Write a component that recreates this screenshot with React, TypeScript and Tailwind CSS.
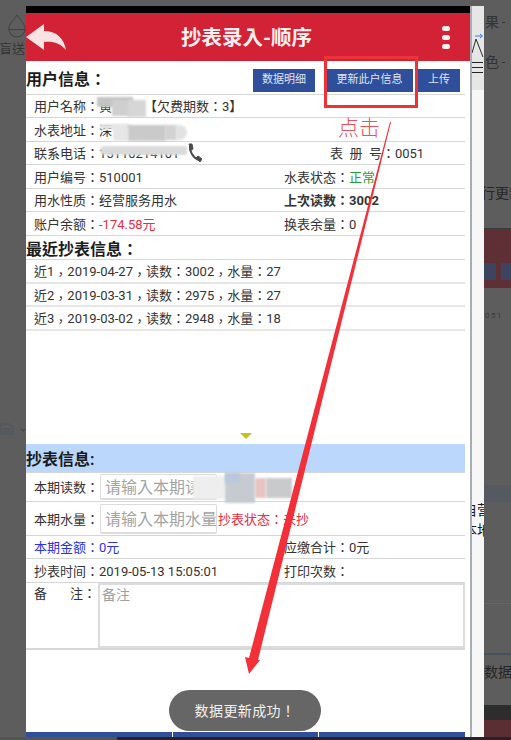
import type {ReactNode} from 'react';

// 打码块：截图里的马赛克
function Smudge({className}: {className: string}) {
  return <div className={`absolute blur-[1px] ${className}`} />;
}

function Row({children, className = ''}: {children: ReactNode; className?: string}) {
  return <div className={`flex items-center pl-[8px] pt-[2px] border-b border-[#d4d6d8] text-[13px] text-[#333] ${className}`}>{children}</div>;
}

function Half({children, className = ''}: {children: ReactNode; className?: string}) {
  return <div className={`w-[250px] shrink-0 whitespace-nowrap ${className}`}>{children}</div>;
}

function Heading({children}: {children: ReactNode}) {
  return <h2 className="pt-[4px] text-[16px] font-bold text-[#1c1c1c] whitespace-nowrap">{children}</h2>;
}

// 原图的逗号偏低
function Comma() {
  return <span className="relative top-[3px]">，</span>;
}

function Field({placeholder, className = ''}: {placeholder: string; className?: string}) {
  return (
    <div className={`w-[117px] shrink-0 overflow-hidden whitespace-nowrap rounded-[2px] border border-[#dcdcdc] border-b-2 pl-[4px] text-[16px] text-[#a4a4a4] ${className}`}>
      {placeholder}
    </div>
  );
}

function LeftStrip() {
  return (
    <div className="w-[26px] shrink-0 overflow-hidden pt-[14px]">
      <svg viewBox="0 0 22 26" className="ml-[7px] h-[24px] w-[20px]" fill="none" stroke="#3e3e3e" strokeWidth="1">
        <path d="M11 1 C7 7 2 11 2 16 a9 9 0 0 0 18 0 C20 11 15 7 11 1Z" />
        <path d="M2 17 H20" />
      </svg>
      <div className="mt-[3px] ml-[-1px] w-[30px] whitespace-nowrap text-[13px] leading-[15px] text-[#353535]">盲送</div>
      <svg viewBox="0 0 26 12" className="mt-[367px] h-[12px] w-[26px]" fill="none" stroke="#525861" strokeWidth="1.5">
        <path d="M1 1H9L13 4V11H1Z" />
        <path d="M3 6H11M3 9H11" />
        <path d="M21 6L23 8L25 6" stroke="#4a4a4a" />
      </svg>
    </div>
  );
}

function Gutter() {
  return (
    <div className="mt-[6px] flex w-[12px] shrink-0 flex-col overflow-hidden">
      <div className="h-[84px] shrink-0 bg-[#e6e6e6] pt-[27px] text-[#1e1e1e]">
        <svg viewBox="0 0 12 26" className="h-[26px] w-[12px]" fill="none" stroke="#2a2a2a" strokeWidth="1">
          <path d="M0 20L4 6L11 24" />
          <path d="M3 3H10M8 1L10.5 3L8 5" stroke="#3d7fd6" />
        </svg>
        <div className="mt-[3px] flex flex-col gap-[4px]">
          <span className="h-[1px] w-[11px] bg-[#222]" />
          <span className="h-[1px] w-[11px] bg-[#222]" />
          <span className="h-[1px] w-[11px] bg-[#222]" />
        </div>
      </div>
      <div className="flex-1 bg-[#f7f7f7] pt-[410px]">
        <div className="ml-[-9px] w-[40px] whitespace-nowrap text-[14px] leading-[20px] text-[#1a1a1a]">自营</div>
        <div className="ml-[-9px] w-[40px] whitespace-nowrap text-[14px] leading-[20px] text-[#1a1a1a]">本地</div>
      </div>
    </div>
  );
}

function RightStrip() {
  return (
    <div className="flex w-[28px] shrink-0 flex-col overflow-hidden text-[#2c2c2c]">
      <div className="mt-[14px] ml-[1px] flex h-[16px] items-center gap-[3px] text-[14px] text-[#333]">果<span className="h-[1px] w-[3px] bg-[#333]" /></div>
      <div className="mt-[24px] ml-[1px] flex h-[16px] items-center gap-[3px] text-[14px] text-[#333]">色<span className="h-[1px] w-[3px] bg-[#333]" /></div>
      <div className="mt-[113px] ml-[-3px] h-[20px] whitespace-nowrap text-[14px] leading-[20px] text-[#262626]">行更新</div>
      <div className="mt-[25px] h-[60px] shrink-0 border-t border-[#333c38] bg-[#5e3035] pt-[34px]">
        <div className="flex gap-[5px]">
          <div className="h-[17px] w-[13px] bg-[#3b4560]" />
          <div className="h-[17px] w-[11px] bg-[#3b4560]" />
        </div>
      </div>
      <div className="mt-[22px] h-[12px] pl-[1px] text-[8px] leading-[12px] tracking-[1.5px] text-[#3a3a3a]">051</div>
      <div className="mt-[163px] h-[17px] shrink-0 bg-[#555a61]" />
      <div className="mt-[101px] h-[1px] shrink-0 bg-[#666]" />
      <div className="mt-[49px] h-[2px] shrink-0 bg-[#46505c]" />
      <div className="mt-[7px] h-[20px] whitespace-nowrap text-[14px] leading-[20px] text-[#252525]">数据结</div>
      <div className="mt-[23px] h-[15px] shrink-0 bg-[#2d2d2d]" />
      <div className="flex-1 bg-[#5a2e33]" />
    </div>
  );
}

export default function App() {
  return (
    <div className='relative flex h-[740px] w-[511px] flex-col overflow-hidden bg-[#5d5d5d] font-[Roboto,"Noto_Sans_CJK_TC",sans-serif]'>
      <div className="flex h-[737px] shrink-0">
        <LeftStrip />

        <div className="mt-[6px] flex w-[446px] shrink-0 flex-col border-r-[2px] border-[#a9aeb5] bg-white">
          <div className="h-[7px] shrink-0 bg-black" />
          <header className="relative flex h-[48px] shrink-0 items-center justify-center bg-[#d32136] pt-[2px]">
            <svg viewBox="0 0 41 26" className="absolute left-0 top-[11px] h-[26px] w-[41px]" fill="#fbe3e3">
              <path d="M0 13 L18 0 L18 7 C30 7 38 14 40 26 C34 19 27 17 18 18 L18 26 Z" />
            </svg>
            <span className="ml-[-3px] text-[20.5px] font-bold text-[#fdf0f0]">抄表录入-顺序</span>
            <div className="absolute left-[416px] top-[13px] flex flex-col gap-[4px]">
              <span className="h-[5px] w-[8px] rounded-full bg-[#fdf0f0]" />
              <span className="h-[5px] w-[8px] rounded-full bg-[#fdf0f0]" />
              <span className="h-[5px] w-[8px] rounded-full bg-[#fdf0f0]" />
            </div>
          </header>

          <div className="w-[439px]">
            <div className="flex h-[34px] items-center border-b border-[#d4d6d8]">
              <Heading>用户信息：</Heading>
              <div className="ml-auto mr-[5px] mt-[5px] flex text-[11px] text-[#dfe4f2]">
                <button className="h-[23px] w-[62px] bg-[#2f4f9b] pt-[1px]">数据明细</button>
                <button className="ml-[11px] h-[23px] w-[87px] bg-[#2f4f9b] pt-[1px]">更新此户信息</button>
                <button className="ml-[5px] h-[23px] w-[42px] bg-[#2f4f9b] pt-[1px]">上传</button>
              </div>
            </div>
            <Row className="h-[23px]">用户名称：黄<span className="ml-[32px]">【欠费期数：3】</span></Row>
            <Row className="h-[24px]">水表地址：深</Row>
            <Row className="h-[23px]">
              <Half className="!w-[296px]">联系电话：15110214101</Half>
              <span className="whitespace-pre">表  册  号：0051</span>
            </Row>
            <Row className="h-[24px]"><Half>用户编号：510001</Half><span>水表状态：<span className="text-[#2f9a3a]">正常</span></span></Row>
            <Row className="h-[23px]"><Half>用水性质：经营服务用水</Half><span className="font-bold">上次读数：3002</span></Row>
            <Row className="h-[24px]"><Half>账户余额：<span className="text-[#ee2b3f]">-174.58元</span></Half><span>换表余量：0</span></Row>
            <div className="flex h-[24px] items-center border-b border-[#d4d6d8]"><Heading>最近抄表信息：</Heading></div>
            <Row className="h-[24px] !border-b-2 !border-[#e6e6e6]"><span>近1<Comma />2019-04-27<Comma />读数：3002<Comma />水量：27</span></Row>
            <Row className="h-[23px] !border-b-2 !border-[#e6e6e6]"><span>近2<Comma />2019-03-31<Comma />读数：2975<Comma />水量：27</span></Row>
            <Row className="h-[24px] !border-b-2 !border-[#e6e6e6]"><span>近3<Comma />2019-03-02<Comma />读数：2948<Comma />水量：18</span></Row>

            <div className="flex h-[113px] items-end justify-center pb-[5px]">
              <svg viewBox="0 0 12 6" className="h-[6px] w-[12px]"><path d="M0 0H12L6 6Z" fill="#c8c214" /></svg>
            </div>

            <div className="flex h-[29px] items-center border-b border-[#d4d6d8] bg-[#bbd8fc]"><Heading>抄表信息:</Heading></div>
            <Row className="h-[29px]">
              <span className="w-[66px] shrink-0">本期读数：</span>
              <Field placeholder="请输入本期读数" className="mt-[-2px] h-[26px] leading-[25px]" />
            </Row>
            <Row className="h-[34px]">
              <span className="w-[66px] shrink-0">本期水量：</span>
              <Field placeholder="请输入本期水量" className="mt-[-2px] h-[30px] leading-[29px]" />
              <span className="ml-[1px] text-[#ee2b3f]">抄表状态：未抄</span>
            </Row>
            <Row className="h-[23px]"><Half className="text-[#2b32e0]">本期金额：0元</Half><span>应缴合计：0元</span></Row>
            <Row className="h-[24px]"><Half>抄表时间：2019-05-13 15:05:01</Half><span>打印次数：</span></Row>
            <div className="flex h-[67px] border-b-2 border-[#d8d8d8]">
              <span className="flex w-[72px] shrink-0 pl-[8px] pt-[1px] text-[13px] text-[#333]"><span className="w-[36px]">备</span>注：</span>
              <div className="w-[367px] border-2 border-[#dcdcdc] pl-[2px] text-[14px] leading-[20px] text-[#a0a0a0]">备注</div>
            </div>

            <div className="h-[82px]" />
            <div className="flex h-[5px] gap-[1px] bg-white">
              <div className="flex-1 bg-[#2f4f9b]" />
              <div className="flex-1 bg-[#2f4f9b]" />
              <div className="flex-1 bg-[#2f4f9b]" />
            </div>
          </div>
        </div>

        <Gutter />
        <RightStrip />
      </div>

      <div className="flex flex-1">
        <div className="w-[117px] bg-[#555]" />
        <div className="flex-1 bg-[#2b1f2b]" />
      </div>

      {/* 打码 */}
      <Smudge className="left-[97px] top-[97px] h-[10px] w-[36px] bg-[#c4c4c4]" />
      <Smudge className="left-[112px] top-[100px] h-[16px] w-[20px] bg-[#cfcfcf]" />
      <Smudge className="left-[128px] top-[100px] h-[17px] w-[18px] bg-[#d6d6d6]" />
      <Smudge className="left-[100px] top-[124px] h-[5px] w-[30px] bg-[#e4e4e4]" />
      <Smudge className="left-[113px] top-[125px] h-[16px] w-[15px] bg-[#e6e6e6]" />
      <Smudge className="left-[128px] top-[125px] h-[16px] w-[38px] bg-[#cacaca]" />
      <Smudge className="left-[165px] top-[125px] h-[15px] w-[12px] bg-[#d2d2d2]" />
      <Smudge className="left-[176px] top-[125px] h-[15px] w-[11px] rounded-r-full bg-[#e2e2e2]" />
      <Smudge className="left-[100px] top-[146px] h-[9px] w-[87px] rounded-l-full bg-[#dadada]" />
      <Smudge className="left-[193px] top-[476px] h-[23px] w-[32px] bg-[#eeeeee]" />
      <Smudge className="left-[225px] top-[473px] h-[30px] w-[30px] bg-[#c6cbd2]" />
      <Smudge className="left-[225px] top-[473px] h-[10px] w-[15px] bg-[#b9c8dc]" />
      <Smudge className="left-[255px] top-[478px] h-[20px] w-[11px] bg-[#e8c4c4]" />
      <Smudge className="left-[266px] top-[478px] h-[20px] w-[26px] bg-[#c8cacc]" />

      {/* 电话 */}
      <svg viewBox="0 0 15 20" className="absolute left-[187px] top-[143px] h-[20px] w-[15px]" fill="none" stroke="#4b4b4b">
        <path d="M3 2 C2 8 6 15 12 17" strokeWidth="2" />
        <path d="M2 1 L5 1 L6 6 L4 7 Z" fill="#4b4b4b" strokeWidth="1" />
        <path d="M9 15 L11 13 L15 16 L13 19 Z" fill="#4b4b4b" strokeWidth="1" />
      </svg>

      {/* 标注 */}
      <div className="absolute left-[324px] top-[56px] h-[52px] w-[94px] border-[3px] border-[#ee3338]" />
      <span className="absolute left-[338px] top-[113px] text-[21px] font-light leading-[30px] text-[#e8505a]">点击</span>
      <svg viewBox="0 0 511 740" className="pointer-events-none absolute left-0 top-0 h-[740px] w-[511px]">
        <path d="M390 122 L391 122 L258 660 L260 660 L249 674 L245 657 L249 658 Z" fill="#f2303a" />
      </svg>

      {/* 提示 */}
      <div className="absolute left-[169px] top-[690px] flex h-[41px] w-[152px] items-center justify-center rounded-full bg-[#666] pt-[1px] text-[14px] tracking-[0.4px] text-[#f2f2f2]">
        数据更新成功！
      </div>
    </div>
  );
}
